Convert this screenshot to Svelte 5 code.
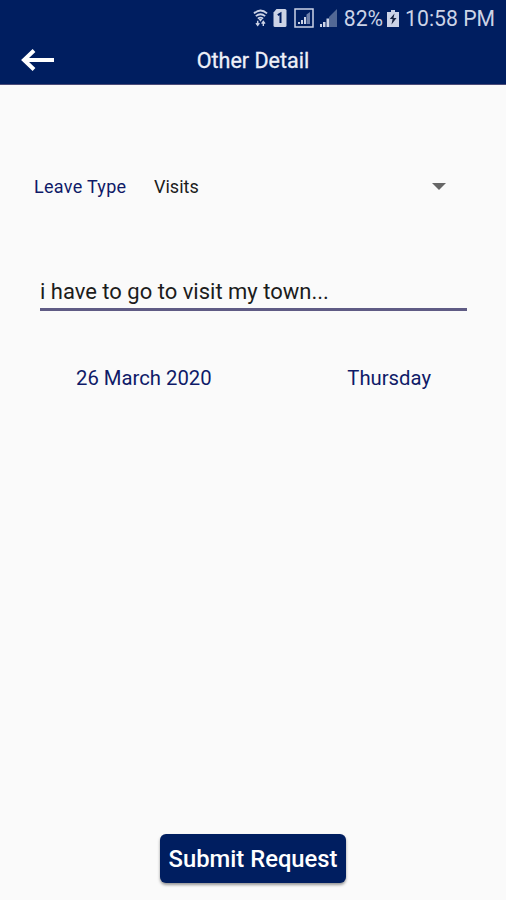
<script lang="ts">
  let leaveType = $state("Visits");
  let reason = $state("i have to go to visit my town...");

  const date = "26 March 2020";
  const day = "Thursday";
</script>

<div class="screen">
  <header>
    <div class="status">
      <svg class="wifi" width="15" height="19" viewBox="0 0 16 20">
        <g fill="none" stroke="currentColor" stroke-width="1.9">
          <path d="M1 4.500Q8 -1.500 15 4.500" />
          <path d="M3 7.500Q8 3.400 13 7.500" />
          <path d="M5.200 10.200Q8 7.800 10.800 10.200" />
        </g>
        <path d="M6 10.500h4L8 13.500z" fill="currentColor" />
        <path d="M5 12.500v5M3.200 15l1.800 2.400L6.800 15M11 18v-5M9.200 15.500l1.800-2.400 1.800 2.400" fill="none" stroke="currentColor" stroke-width="1.5" />
      </svg>
      <svg class="sim" width="14" height="18" viewBox="0 0 14 18">
        <path d="M3.500 0H12a1.500 1.500 0 0 1 1.500 1.500v15A1.500 1.500 0 0 1 12 18H2a1.500 1.500 0 0 1-1.500-1.500V3.500z" fill="currentColor" />
        <path d="M4.800 6.200L7.500 4.500v9.500" fill="none" stroke="#001e60" stroke-width="2" />
      </svg>
      <svg class="boxed" width="20" height="20" viewBox="0 0 20 20">
        <rect x="1" y="1" width="18" height="18" fill="none" stroke="currentColor" stroke-width="1.5" />
        <path d="M4 16v-2h2v2zM7 16v-4h2v4zM10 16V9h2v7z" fill="currentColor" />
        <path d="M12.500 16V6.500l3.500-2.500v12z" fill="#6f80aa" />
      </svg>
      <svg class="signal" width="17" height="18" viewBox="0 0 17 18">
        <path d="M9 18V8l8-8v18z" fill="#526895" />
        <path d="M0 18v-3h2v3zM3 18v-5h2.500v5zM6.500 18V9.500H9V18z" fill="currentColor" />
      </svg>
      <span class="percent">82%</span>
      <svg class="battery" width="12" height="17" viewBox="0 0 12 17">
        <path d="M4 0h4v2h4v15H0V2h4z" fill="currentColor" />
        <path d="M7.500 3.500L2.800 9h2.800L4.500 14.500 9.500 8H6.500z" fill="#17233f" />
      </svg>
      <span class="clock">10:58 PM</span>
    </div>
    <div class="bar">
      <button class="back" aria-label="Back">
        <svg width="34" height="24" viewBox="0 0 34 24">
          <path d="M33 12H3M13 2.500L3 12l10 9.500" fill="none" stroke="currentColor" stroke-width="4" />
        </svg>
      </button>
      <h1>Other Detail</h1>
    </div>
  </header>

  <main>
    <div class="row">
      <span class="label">Leave Type</span>
      <span class="value">{leaveType}</span>
      <span class="caret"></span>
    </div>
    <input type="text" aria-label="Reason" bind:value={reason} />
    <div class="when">
      <span class="date">{date}</span>
      <span class="day">{day}</span>
    </div>
  </main>

  <footer>
    <button class="submit">Submit Request</button>
  </footer>
</div>

<style>
  :global(body) {
    margin: 0;
    background: #fafafa;
  }

  .screen {
    display: flex;
    flex-direction: column;
    width: 506px;
    height: 900px;
    background: #fafafa;
    font-family: Roboto, sans-serif;
    color: #1c1c1c;
  }

  button {
    border: 0;
    padding: 0;
    font-family: inherit;
  }

  header {
    box-sizing: border-box;
    height: 85px;
    border-bottom: 1px solid #4b4b78;
    background: #001e60;
  }

  .status {
    display: flex;
    align-items: center;
    justify-content: flex-end;
    height: 36px;
    padding-right: 11px;
    color: #ccd3e6;
    font-size: 21.2px;
    white-space: nowrap;
  }

  .wifi {
    margin-right: 5px;
  }

  .sim {
    margin-right: 7px;
  }

  .boxed {
    margin-right: 6px;
  }

  .signal {
    margin-right: 7px;
  }

  .percent {
    margin-right: 4px;
  }

  .battery {
    margin-right: 6px;
  }

  .bar {
    display: grid;
    grid-template-columns: 56px 1fr 56px;
    align-items: center;
    height: 48px;
  }

  .back {
    display: flex;
    margin-left: 21px;
    background: none;
    color: #fff;
  }

  h1 {
    margin: 0;
    text-align: center;
    font-size: 21.5px;
    font-weight: 400;
    color: #eef0f8;
    -webkit-text-stroke: 0.3px;
  }

  main {
    flex: 1;
    padding: 83px 34px 0;
  }

  .row {
    display: flex;
    align-items: center;
    height: 36px;
    font-size: 18px;
  }

  .label {
    width: 120px;
    color: #0f1a68;
    letter-spacing: 0.3px;
  }

  .value {
    flex: 1;
  }

  .caret {
    margin-right: 26px;
    border: 7px solid transparent;
    border-top-color: #666;
    border-bottom: 0;
  }

  input {
    display: block;
    box-sizing: border-box;
    width: 427px;
    height: 42px;
    margin: 65px 0 0 6px;
    padding: 5px 0 0;
    border: 0;
    border-bottom: 3px solid #5f5b84;
    outline: 0;
    background: none;
    color: #1c1c1c;
    font-family: inherit;
    font-size: 22px;
  }

  .when {
    display: flex;
    justify-content: space-between;
    margin-top: 54px;
    padding: 0 41px 0 42px;
    font-size: 20.3px;
    line-height: 26px;
    color: #0f1a68;
  }

  footer {
    display: flex;
    justify-content: center;
    height: 66px;
  }

  .submit {
    width: 186px;
    height: 49px;
    padding-top: 1px;
    border-radius: 6px;
    background: #001e60;
    box-shadow: 0 2px 3px rgba(0, 0, 0, 0.4);
    color: #fff;
    font-size: 23.8px;
    font-weight: 500;
    white-space: nowrap;
  }
</style>
